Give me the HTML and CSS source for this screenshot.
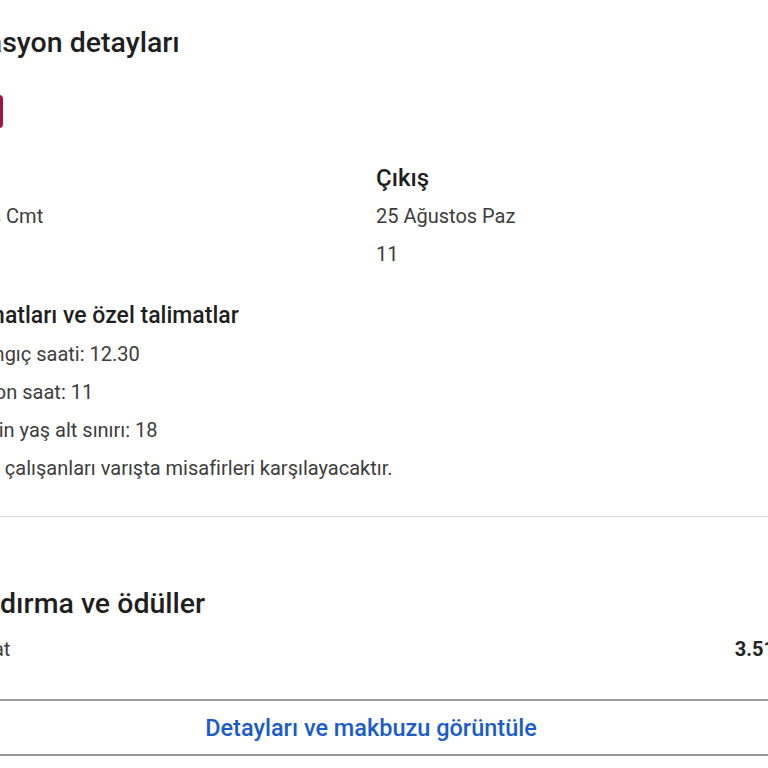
FILE: index.html
```html
<!DOCTYPE html>
<html lang="tr">
<head>
    <meta charset="UTF-8">
    <meta name="viewport" content="width=device-width, initial-scale=1.0">
    <title>Rezervasyon detayları</title>
    <link rel="stylesheet" href="styles.css">
</head>
<body>
    <div class="page">
        <h1>Rezervasyon detayları</h1>
        <div class="badge"></div>

        <div class="dates">
            <div class="date">
                <div class="label">Giriş</div>
                <div class="line">24 Ağustos Cmt</div>
                <div class="line">15</div>
            </div>
            <div class="date">
                <div class="label">Çıkış</div>
                <div class="line">25 Ağustos Paz</div>
                <div class="line">11</div>
            </div>
        </div>

        <div class="rules">
            <h3>Giriş talimatları ve özel talimatlar</h3>
            <div class="line">Giriş başlangıç saati: 12.30</div>
            <div class="line">Çıkış için son saat: 11</div>
            <div class="line">Konuklar için yaş alt sınırı: 18</div>
            <div class="line">Konaklama çalışanları varışta misafirleri karşılayacaktır.</div>
        </div>

        <div class="pricing">
            <h2>Fiyatlandırma ve ödüller</h2>
            <div class="price-row">
                <span class="line">Toplam fiyat</span>
                <strong>3.512,40 TL</strong>
            </div>
            <button class="receipt">Detayları ve makbuzu görüntüle</button>
        </div>
    </div>
</body>
</html>
```

FILE: styles.css
```css
body { margin: 0; overflow: hidden; background: #fff; font-family: Roboto, "Noto Sans", sans-serif; color: #1f1f1f; }
.page { width: 942px; margin-left: -100px; padding-top: 25px; }
h1, h2 { font-size: 28.5px; font-weight: 500; line-height: 36px; margin: 0; color: #1f1f1f; }
.badge { width: 103px; height: 33px; margin-top: 34px; background: #a3153f; border-radius: 4px; }
.dates { display: grid; grid-template-columns: 1fr 1fr; column-gap: 10px; margin-top: 31px; }
.label { font-size: 24px; font-weight: 500; line-height: 38px; color: #1f1f1f; }
.line { font-size: 20px; line-height: 38px; color: #3d3d3d; }
.rules { margin-top: 24px; padding-bottom: 29px; border-bottom: 1px solid #dcdcdc; }
.rules h3 { font-size: 23px; font-weight: 500; line-height: 38px; margin: 0; color: #1f1f1f; }
.pricing { padding-top: 69px; }
.price-row { display: flex; justify-content: space-between; align-items: center; margin-top: 8px; }
.price-row strong { font-size: 20px; font-weight: 700; line-height: 38px; color: #222; }
.receipt { display: block; width: 100%; height: 57px; margin-top: 31px; background: #fff; border: 2px solid #9a9a9a; border-radius: 4px; font-family: Roboto, sans-serif; font-size: 23.5px; font-weight: 500; color: #1b5ccc; cursor: pointer; }
```
